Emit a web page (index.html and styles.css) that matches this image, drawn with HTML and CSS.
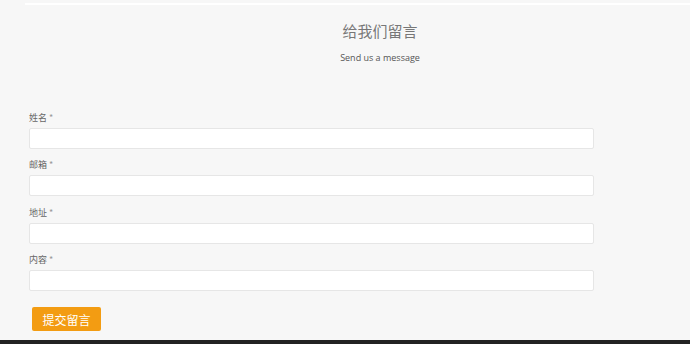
FILE: index.html
```html
<!DOCTYPE html>
<html lang="zh-CN">
<head>
    <meta charset="UTF-8">
    <meta name="viewport" content="width=device-width, initial-scale=1.0">
    <title>给我们留言</title>
    <link rel="stylesheet" href="styles.css">
</head>
<body>
    <div class="top-rule"></div>

    <div class="heading">
        <h2>给我们留言</h2>
        <p>Send us a message</p>
    </div>

    <form class="message-form">
        <div class="field">
            <label>姓名 <span>*</span></label>
            <input type="text">
        </div>
        <div class="field">
            <label>邮箱 <span>*</span></label>
            <input type="text">
        </div>
        <div class="field">
            <label>地址 <span>*</span></label>
            <input type="text">
        </div>
        <div class="field">
            <label>内容 <span>*</span></label>
            <input type="text">
        </div>
        <button type="button">提交留言</button>
    </form>

    <footer></footer>
</body>
</html>
```

FILE: styles.css
```css
html, body {
    height: 100%;
}
body {
    margin: 0;
    padding: 0;
    background: #f7f7f7;
    font-family: "Open Sans", "Noto Sans CJK SC", sans-serif;
    color: #666;
    display: flex;
    flex-direction: column;
    overflow: hidden;
}
.top-rule {
    height: 2px;
    margin: 3px 0 0 25px;
    background: #fff;
}
.heading {
    padding-left: 70px;
    text-align: center;
}
.heading h2 {
    margin: 16px 0 0;
    font-family: "Noto Sans CJK SC", sans-serif;
    font-weight: normal;
    font-size: 15px;
    line-height: 20px;
    color: #777;
}
.heading p {
    margin: 10px 0 0;
    font-size: 9px;
    line-height: 14px;
    color: #555;
}
.message-form {
    padding: 47px 0 0 29px;
    flex: 1;
}
.field {
    margin-bottom: 10.3px;
}
.field label {
    display: block;
    font-family: "Noto Sans CJK SC", sans-serif;
    font-size: 9px;
    line-height: 12px;
    margin-bottom: 4px;
    color: #666;
}
.field label span {
    color: #999;
}
.field input {
    display: block;
    box-sizing: border-box;
    width: 565px;
    height: 21px;
    margin: 0;
    border: 1px solid #e6e6e6;
    border-radius: 2px;
    background: #fff;
}
.message-form button {
    margin: 6px 0 0 3px;
    width: 69px;
    height: 24px;
    border: none;
    border-radius: 2px;
    background: #f39c12;
    color: #fff;
    font-family: "Noto Sans CJK SC", sans-serif;
    font-size: 12px;
    padding: 0;
}
footer {
    height: 4px;
    background: #222;
}
```
